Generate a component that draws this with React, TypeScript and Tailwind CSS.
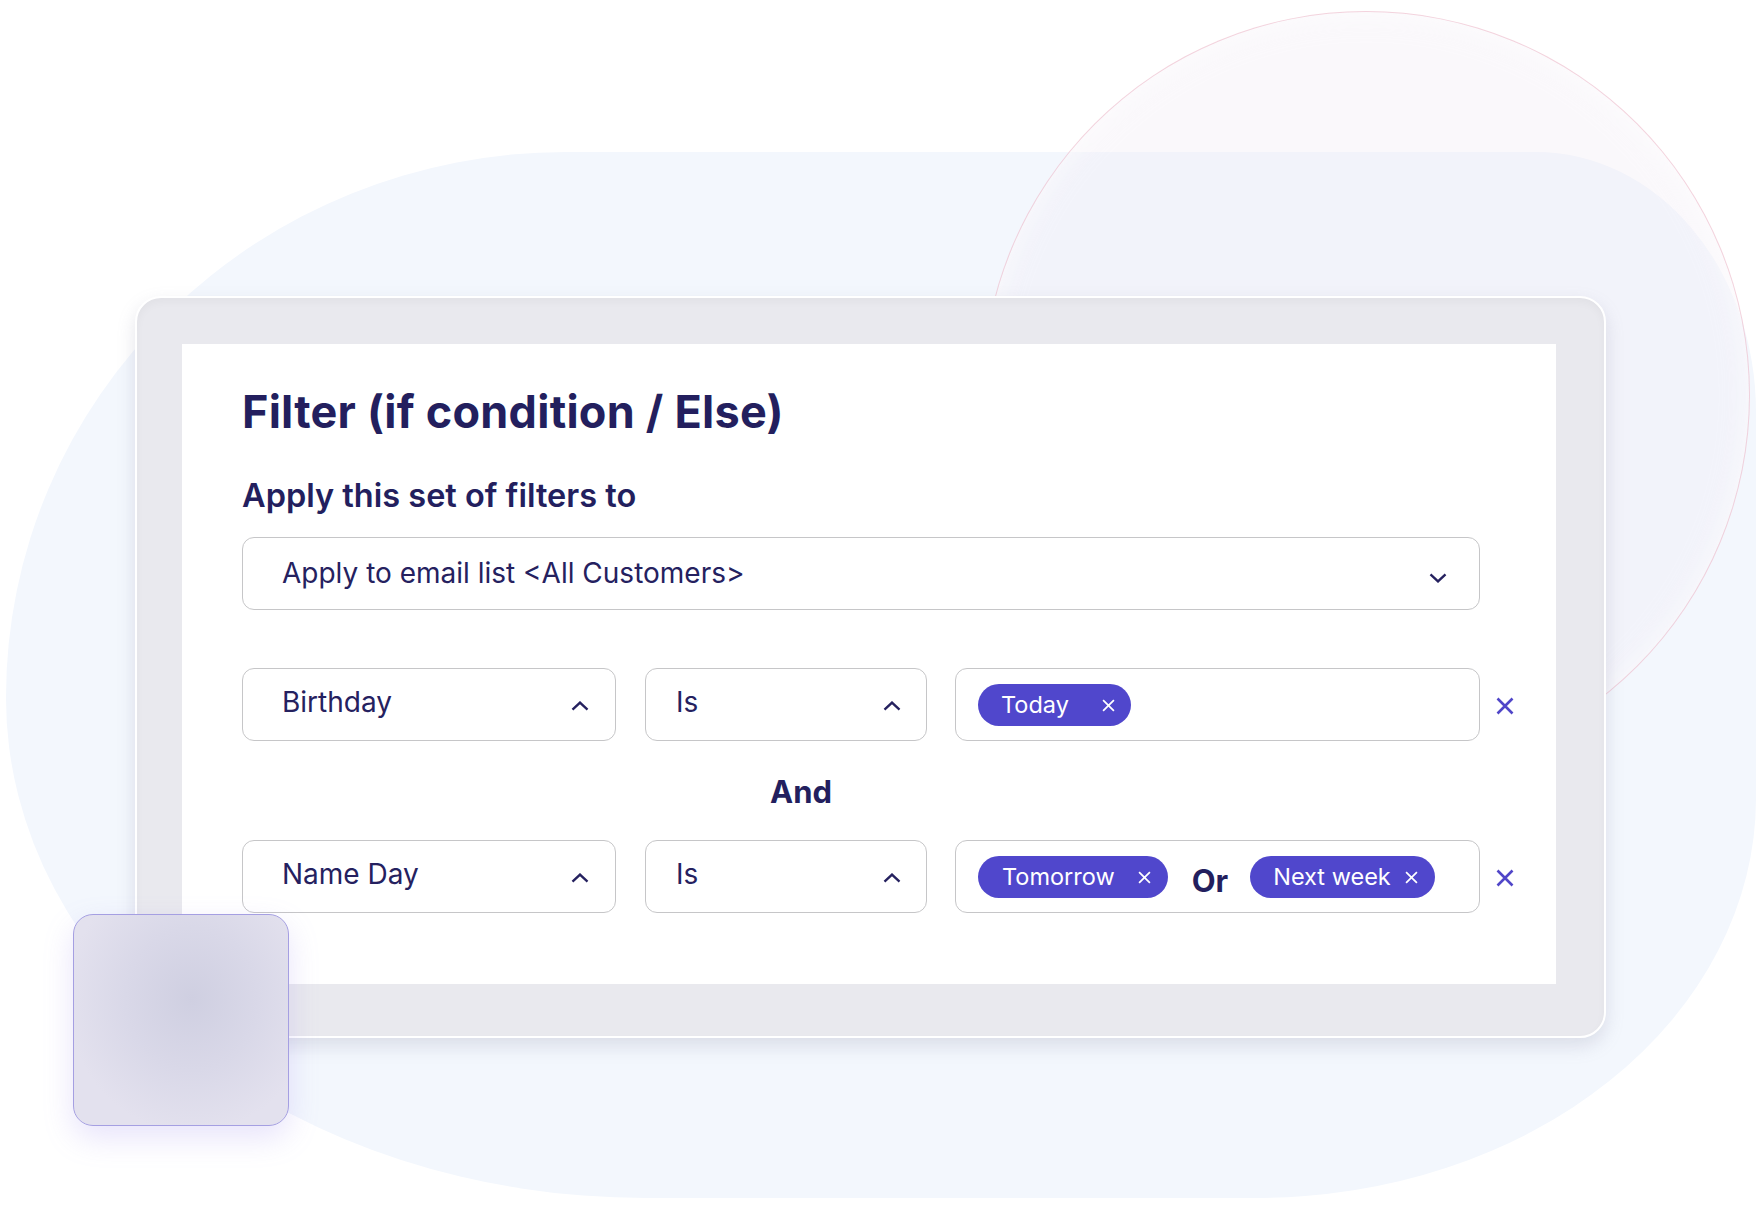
import React from "react";

const Chevron = ({ up = false }: { up?: boolean }) => (
  <svg width="18" height="10" viewBox="0 0 18 10" fill="none" className="shrink-0">
    <path
      d={up ? "M1.5 8.6L9 1.6l7.5 7" : "M1.5 1.4L9 8.4l7.5-7"}
      stroke="#25215f"
      strokeWidth="2.4"
    />
  </svg>
);

const Cross = ({ size, color, stroke }: { size: number; color: string; stroke: number }) => (
  <svg width={size} height={size} viewBox="0 0 18 18" fill="none" className="shrink-0">
    <path d="M1.5 1.5l15 15M16.5 1.5l-15 15" stroke={color} strokeWidth={stroke} />
  </svg>
);

const Chip = ({ label, className }: { label: string; className: string }) => (
  <div
    className={`flex h-[42px] items-center rounded-full bg-[#5047cc] text-[23.5px] leading-none text-white ${className}`}
  >
    <span>{label}</span>
    <Cross size={13} color="#ffffff" stroke={2.4} />
  </div>
);

const DropBox = ({ label, width, pad }: { label: string; width: string; pad: string }) => (
  <div
    className={`flex h-[73px] shrink-0 items-center justify-between rounded-[12px] border-[1.5px] border-[#c6c6c8] bg-white ${width} ${pad}`}
  >
    <span className="pb-[5px] text-[28px] leading-none text-[#25215f]">{label}</span>
    <div className="mt-[3px]">
      <Chevron up />
    </div>
  </div>
);

const App = () => {
  return (
    <div className="relative h-[1216px] w-[1763px] overflow-hidden bg-white font-['Inter',sans-serif]">
      {/* background blob */}
      <div className="absolute left-[6px] top-[152px] h-[1046px] w-[1750px] rounded-[560px_220px_500px_640px/545px_260px_400px_500px] bg-[#f3f7fd]" />
      {/* glass circle */}
      <div className="absolute left-[982px] top-[11px] h-[768px] w-[768px] rounded-full border border-[rgba(236,180,196,0.55)] bg-[rgba(240,236,244,0.35)] shadow-[inset_0_0_30px_rgba(255,255,255,0.7)]" />

      <div className="relative pl-[135px] pt-[296px]">
        <div className="w-[1471px] rounded-[26px] border-2 border-white bg-[#e9e9ee] pb-[52px] pl-[45px] pr-[48px] pt-[46px] shadow-[inset_0_4px_8px_rgba(0,0,0,0.035),0_8px_18px_rgba(130,130,160,0.22)]">
          <div className="w-[1374px] bg-white pb-[71px] pl-[60px] pt-[45px]">
            <h1 className="text-[45px] font-bold leading-none tracking-[0.25px] text-[#231f5e]">
              Filter (if condition / Else)
            </h1>
            <h2 className="mt-[46px] text-[32.5px] font-semibold leading-none text-[#231f5e]">
              Apply this set of filters to
            </h2>

            <div className="mt-6 flex h-[73px] w-[1238px] items-center justify-between rounded-[12px] border-[1.5px] border-[#c6c6c8] pl-[39px] pr-[32px]">
              <span className="text-[28px] leading-none text-[#25215f]">
                Apply to email list &lt;All Customers&gt;
              </span>
              <div className="mt-[9px]">
                <Chevron />
              </div>
            </div>

            <div className="mt-[58px] flex items-center">
              <DropBox label="Birthday" width="w-[374px]" pad="pl-[39px] pr-[26px]" />
              <div className="ml-[29px]">
                <DropBox label="Is" width="w-[282px]" pad="pl-[30px] pr-[25px]" />
              </div>
              <div className="ml-[28px] flex h-[73px] w-[525px] items-center rounded-[12px] border-[1.5px] border-[#c6c6c8] pl-[22px] pt-[2px]">
                <Chip label="Today" className="gap-[33px] pl-[23px] pr-[16px]" />
              </div>
              <div className="ml-[16px] mt-[3px]">
                <Cross size={18} color="#5046c8" stroke={2.6} />
              </div>
            </div>

            <div className="mt-[35px] pl-[528px] text-[31px] font-bold leading-none text-[#231f5e]">
              And
            </div>

            <div className="mt-[33px] flex items-center">
              <DropBox label="Name Day" width="w-[374px]" pad="pl-[39px] pr-[26px]" />
              <div className="ml-[29px]">
                <DropBox label="Is" width="w-[282px]" pad="pl-[30px] pr-[25px]" />
              </div>
              <div className="ml-[28px] flex h-[73px] w-[525px] items-center rounded-[12px] border-[1.5px] border-[#c6c6c8] pl-[22px] pt-[2px]">
                <Chip label="Tomorrow" className="gap-[23px] pl-[24px] pr-[17px]" />
                <span className="ml-[24px] pt-[6px] text-[31px] font-bold leading-none text-[#231f5e]">
                  Or
                </span>
                <Chip label="Next week" className="ml-[22px] gap-[14px] pl-[23px] pr-[17px]" />
              </div>
              <div className="ml-[16px] mt-[3px]">
                <Cross size={18} color="#5046c8" stroke={2.6} />
              </div>
            </div>
          </div>
        </div>
      </div>

      {/* frosted glass square */}
      <div className="absolute left-[73px] top-[914px] h-[212px] w-[216px] rounded-[20px] border-[1.5px] border-[#a59fe2] bg-[radial-gradient(ellipse_at_55%_40%,#cfcfe1_0%,#d9d8e8_40%,#e3e1ee_75%)] shadow-[0_12px_30px_rgba(150,130,235,0.22)]" />
    </div>
  );
};

export default App;
